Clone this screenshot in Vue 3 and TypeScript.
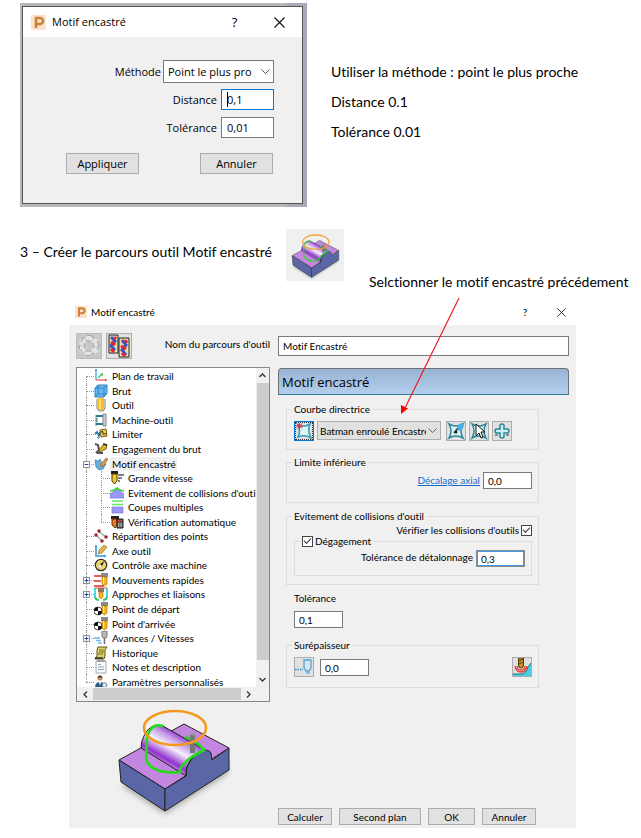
<script setup lang="ts">
import { ref } from 'vue'

interface TreeItem {
  label: string
  icon: string
  level: 1 | 2
  toggle?: '+' | '-'
  selected?: boolean
  first?: boolean
  last?: boolean
}

const method = ref('Point le plus pro')
const distance = ref('0,1')
const tolerance = ref('0,01')
const pathName = ref('Motif Encastré')
const curve = ref('Batman enroulé Encastré')
const axialOffset = ref('0,0')
const checkCollisions = ref(true)
const clearance = ref(true)
const gougeTolerance = ref('0,3')
const pathTolerance = ref('0,1')
const thickness = ref('0,0')

const items: TreeItem[] = [
  { label: 'Plan de travail', icon: 'plane', level: 1, first: true },
  { label: 'Brut', icon: 'block', level: 1 },
  { label: 'Outil', icon: 'tool', level: 1 },
  { label: 'Machine-outil', icon: 'machine', level: 1 },
  { label: 'Limiter', icon: 'limit', level: 1 },
  { label: 'Engagement du brut', icon: 'engage', level: 1 },
  { label: 'Motif encastré', icon: 'pattern', level: 1, toggle: '-', selected: true },
  { label: 'Grande vitesse', icon: 'speed', level: 2 },
  { label: "Evitement de collisions d'outil", icon: 'avoid', level: 2 },
  { label: 'Coupes multiples', icon: 'cuts', level: 2 },
  { label: 'Vérification automatique', icon: 'verify', level: 2, last: true },
  { label: 'Répartition des points', icon: 'points', level: 1 },
  { label: 'Axe outil', icon: 'axis', level: 1 },
  { label: 'Contrôle axe machine', icon: 'compass', level: 1 },
  { label: 'Mouvements rapides', icon: 'rapid', level: 1, toggle: '+' },
  { label: 'Approches et liaisons', icon: 'leads', level: 1, toggle: '+' },
  { label: 'Point de départ', icon: 'start', level: 1 },
  { label: "Point d'arrivée", icon: 'start', level: 1 },
  { label: 'Avances / Vitesses', icon: 'feeds', level: 1, toggle: '+' },
  { label: 'Historique', icon: 'history', level: 1 },
  { label: 'Notes et description', icon: 'notes', level: 1 },
  { label: 'Paramètres personnalisés', icon: 'user', level: 1, last: true },
]

const mill = '<path d="M7 0h7v4H7z" fill="#8a8a8a"/><path d="M8 4h5v7l-2.500 2L8 11z" fill="#f4b824" stroke="#94660a" stroke-width=".6"/><path d="M9.500 4v7" stroke="#ffe58a"/>'

const icons: Record<string, string> = {
  plane: '<path d="M2 0v11" stroke="#3fa9dc" stroke-width="1.300"/><path d="M2 11h10" stroke="#ee6a6a" stroke-width="1.400"/><path d="M4 9l4-4" stroke="#3fc25c" stroke-width="1.300"/><path d="M6 4.500h3v3z" fill="#3fc25c"/><path d="M.5 2L2 0l1.500 2z" fill="#3fa9dc"/><path d="M11 9.500l2.500 1.500-2.500 1.500z" fill="#d9534f"/>',
  block: '<path d="M1 4l3-3h9v8l-3 4H1z" fill="#6ab8f2" stroke="#2f7fc4"/><path d="M1 4h9v9M10 4l3-3M4 1v9L1 13M4 10h9" fill="none" stroke="#2f7fc4" stroke-width=".9"/>',
  tool: '<path d="M4 0h6v9q0 3-3 4-3-1-3-4z" fill="#f5bd22"/><path d="M3 1v9l2 3h4l2-3V1" fill="none" stroke="#8f8f8f" stroke-width="1.200"/><path d="M6 1v10" stroke="#ffe391" stroke-width="1.500"/>',
  machine: '<path d="M2 2v11" stroke="#b9bdc0" stroke-width="2"/><path d="M2 3h7M2 11h9" stroke="#247d8c" stroke-width="2"/><path d="M9 1h3v12H9z" fill="#c8cccf" stroke="#858d91"/><path d="M3 5v4" stroke="#247d8c" stroke-width="1"/>',
  limit: '<path d="M1 7l2-2 2 4 1-4" fill="none" stroke="#2284b5" stroke-width="1.800"/><path d="M6 3l6-1 1 7-6 1z" fill="#f4cf4e" stroke="#6d5a16"/><path d="M7 5q2-2 2 1t3 0" fill="none" stroke="#222"/><path d="M3 10l2 2" stroke="#2284b5"/>',
  engage: '<path d="M1 2l3 1 1 5-3 3M3 11h6" fill="none" stroke="#555" stroke-width="2"/><path d="M5 8l5-6 3 1-1 4-6 3z" fill="#e6b51f" stroke="#5a4712" stroke-width=".8"/><path d="M9 2l4 1" stroke="#222" stroke-width="1.500"/>',
  pattern: '<path d="M1 3l4 1 1-2 2 4 4 1-3 5-4 1-3-3z" fill="#69aede" stroke="#3a7fb5" stroke-width=".7"/><path d="M6 8l6-7 2 1-5 8z" fill="#d49c4a" stroke="#8b6224" stroke-width=".6"/>',
  speed: '<path d="M1 0h7v3H1z" fill="#222"/><path d="M2 3h5v7l-2.500 3L2 10z" fill="#f5c52d" stroke="#4b3a06"/><path d="M8 4h6M8 7h4M8 10h2" stroke="#555" stroke-width="1.500"/>',
  avoid: '<path d="M0 12V8l7-5 7 5v4z" fill="#9b99f7" stroke="#7673e0" stroke-width=".7"/><path d="M0 5l4-1 3-2 3 2 4 1" fill="none" stroke="#3dd33d" stroke-width="1.600"/>',
  cuts: '<path d="M2 1h11M2 4.500h11" stroke="#62e660" stroke-width="1.500"/><path d="M2 7h11v6H2z" fill="#9b99f7" stroke="#7a78de" stroke-width=".7"/>',
  verify: '<path d="M1 1h8v3H1z" fill="#222"/><path d="M2 4h5v6l-2 3-3-3z" fill="#ea7b28" stroke="#6c2b05"/><path d="M7 4h6v9H7z" fill="#555" stroke="#222"/><path d="M8 6h4" stroke="#e33" stroke-width="1.500"/><path d="M8 9h4M8 11h4" stroke="#fff" stroke-dasharray="1 .5"/>',
  points: '<path d="M4 2l8 6M2 6l6 6" stroke="#8aa" stroke-width="1.200"/><g fill="#a51d2a"><circle cx="5" cy="2" r="1.700"/><circle cx="12" cy="8" r="1.700"/><circle cx="2" cy="6" r="1.700"/><circle cx="8" cy="12" r="1.700"/></g>',
  axis: '<path d="M2 2v10h9" fill="none" stroke="#3395c2" stroke-width="1.500"/><path d="M.5 3L2 .5 3.500 3zM10 10.500l2.500 1.500-2.500 1.500z" fill="#3395c2"/><path d="M4 10l1-4 5-5 3 2-5 6z" fill="#e2b447" stroke="#8c7640" stroke-width=".7"/>',
  compass: '<circle cx="7" cy="7" r="5.700" fill="#f5d66b" stroke="#333" stroke-width="1.300"/><path d="M10.500 3L8 8 3.500 11 6 6z" fill="#222"/><path d="M6 6l2 2-4.500 3z" fill="#fff"/>',
  rapid: '<path d="M0 3h7M0 8h7M0 13h10" stroke="#e02e25" stroke-width="1.600"/>' + mill,
  leads: '<path d="M1 1v8q0 4 4 4M13 1v8q0 4-4 4" fill="none" stroke="#29dbe2" stroke-width="1.800"/><path d="M1 10q1 3 4 3M13 10q-1 3-4 3" fill="none" stroke="#3bc34b" stroke-width="1.600"/><path d="M1 1h12" stroke="#e05a4a"/><path d="M4 1h6v4H4z" fill="#8a7a60"/><path d="M5 5h4v5l-2 2-2-2z" fill="#f4b824" stroke="#94660a" stroke-width=".6"/>',
  start: mill + '<circle cx="4" cy="9" r="4" fill="#fff" stroke="#222" stroke-width=".8"/><path d="M4 9V5a4 4 0 0 0-4 4zM4 9v4a4 4 0 0 0 4-4z" fill="#111"/>',
  feeds: '<path d="M8 0h5v5l-1 2H9L8 5z" fill="#bbb" stroke="#777"/><path d="M10.500 7v6" stroke="#777" stroke-width="1.600"/><path d="M0 7h6M2 9.500h5M4 12h4" stroke="#6fb9ec" stroke-width="1.300"/>',
  history: '<path d="M4 1h9l-2 3v6l-1 3H1l2-3V4z" fill="#dcd45f" stroke="#5a5520"/><path d="M5 4h5M5 6h5M4 8h5" stroke="#5a5520" stroke-width=".8"/><path d="M1 12h8" stroke="#222" stroke-width="1.400"/>',
  notes: '<path d="M2 1h10v12H2z" fill="#fafafa" stroke="#aaa"/><path d="M4 0v2M6 0v2M8 0v2M10 0v2" stroke="#777"/><path d="M4 4.500h3M4 7h6M4 9.500h6" stroke="#8aa9c8"/>',
  user: '<circle cx="6" cy="3" r="2.600" fill="#c88f5d"/><path d="M3.400 2.500q2.600-4 5.200 0z" fill="#333"/><path d="M1 13q0-6 5-6t5 6z" fill="#2b5879"/><circle cx="10.500" cy="10" r="2.300" fill="#dbe8f2" stroke="#5f8bab"/><path d="M5 7l1 4 1-4z" fill="#fff"/>',
}
</script>

<template>
  <main class="page">
    <section class="intro">
      <div class="shot">
        <form class="dialog small" @submit.prevent>
          <header class="titlebar">
            <svg class="logo" viewBox="0 0 15 15" aria-hidden="true">
              <rect width="15" height="15" fill="#fbe3cb" />
              <path d="M5 13V3h4a3 3 0 0 1 0 6H5" fill="none" stroke="#c98239" stroke-width="2.600" />
            </svg>
            <h2>Motif encastré</h2>
            <button type="button" class="caption" aria-label="Aide">?</button>
            <button type="button" class="caption" aria-label="Fermer">
              <svg viewBox="0 0 11 11"><path d="M.5.5l10 10M10.500.5l-10 10" stroke="#111" stroke-width="1.100" /></svg>
            </button>
          </header>
          <div class="fields">
            <div class="field method">
              <label for="methode">Méthode</label>
              <span class="combo">
                <select id="methode" v-model="method"><option>Point le plus pro</option></select>
                <svg viewBox="0 0 9 5"><path d="M.5.5l4 4 4-4" fill="none" stroke="#555" /></svg>
              </span>
            </div>
            <div class="field">
              <label for="distance">Distance</label>
              <span class="focused">
                <input id="distance" v-model="distance" type="text" />
                <i class="caret"></i>
              </span>
            </div>
            <div class="field">
              <label for="tolerance">Tolérance</label>
              <input id="tolerance" v-model="tolerance" type="text" />
            </div>
          </div>
          <footer class="actions">
            <button type="submit">Appliquer</button>
            <button type="button">Annuler</button>
          </footer>
        </form>
      </div>
      <div class="notes">
        <p>Utiliser la méthode : point le plus proche</p>
        <p>Distance 0.1</p>
        <p>Tolérance 0.01</p>
      </div>
    </section>

    <section class="step">
      <p>3 – Créer le parcours outil Motif encastré</p>
      <svg class="thumb" viewBox="0 0 58 52" aria-hidden="true">
        <rect width="58" height="52" fill="#f0f0f0" />
        <use href="#part" x="4" y="4" width="50" height="47" />
      </svg>
    </section>

    <section class="detail">
      <p class="callout">Selctionner le motif encastré précédement</p>
      <svg class="arrow" viewBox="0 0 60 118" aria-hidden="true">
        <path d="M58 1L4 111" stroke="#ee1c1c" stroke-width="1.200" />
        <path d="M0 117V108l7 3.500z" fill="#ff0000" />
      </svg>

      <form class="dialog large" @submit.prevent>
        <header class="titlebar">
          <svg class="logo" viewBox="0 0 15 15" aria-hidden="true">
            <rect width="15" height="15" fill="#fbe3cb" />
            <path d="M5 13V3h4a3 3 0 0 1 0 6H5" fill="none" stroke="#c98239" stroke-width="2.600" />
          </svg>
          <h2>Motif encastré</h2>
          <button type="button" class="caption" aria-label="Aide">?</button>
          <button type="button" class="caption" aria-label="Fermer">
            <svg viewBox="0 0 11 11"><path d="M.5.5l10 10M10.500.5l-10 10" stroke="#222" stroke-width="1.100" /></svg>
          </button>
        </header>

        <div class="body">
          <div class="left">
            <div class="toprow">
              <button type="button" class="tile off" aria-label="Recycler">
                <svg viewBox="0 0 24 24">
                  <path d="M12 4l7 4v8l-7 4-7-4V8z" fill="none" stroke="#e4e4e4" stroke-width="5" stroke-dasharray="7 1.060" stroke-dashoffset="3" />
                  <path d="M10 1l5 1 2 3M20 7l2 5-2 4M17 19l-5 3-3-1M6 19l-4-5 1-3M4 8l3-5M9 7l5 0M16 9l1 5M14 17l-5 0M7 14l1-5" fill="none" stroke="#a0a0a0" stroke-width="1" />
                </svg>
              </button>
              <button type="button" class="tile" aria-label="Copier">
                <svg viewBox="0 0 24 24">
                  <path d="M2 1h9v18H2z" fill="#eedcae" stroke="#222" />
                  <path d="M12 4h10v19H12z" fill="#eedcae" stroke="#222" />
                  <path d="M4 3l4 4-4 5 4 4M15 6l4 5-4 5 4 5" fill="none" stroke="#2f55cf" stroke-width="3" />
                  <path d="M7 3l2 2M4 8l4 3M4 15l3 3M18 6l2 3M14 12l5 3M15 19l3 3" stroke="#e12332" stroke-width="3" />
                </svg>
              </button>
              <label for="nom">Nom du parcours d'outil</label>
            </div>

            <div class="tree">
              <div class="viewport">
                <ul>
                  <li v-for="item in items" :key="item.label" :class="{ first: item.first, last: item.last }">
                    <span class="gutter" :class="{ through: item.level === 2 }">
                      <button v-if="item.toggle" type="button" class="toggle" :aria-label="item.label">
                        <svg viewBox="0 0 7 7">
                          <path d="M1.500 3.500h4" stroke="#2c4a9a" />
                          <path v-if="item.toggle === '+'" d="M3.500 1.500v4" stroke="#2c4a9a" />
                        </svg>
                      </button>
                    </span>
                    <span v-if="item.level === 2" class="gutter inner"></span>
                    <svg class="icon" viewBox="0 0 14 14" fill="none" aria-hidden="true" v-html="icons[item.icon]"></svg>
                    <span class="name" :class="{ selected: item.selected }">{{ item.label }}</span>
                  </li>
                </ul>
                <div class="vbar">
                  <svg viewBox="0 0 7 5"><path d="M.5 4l3-3 3 3" /></svg>
                  <i></i>
                  <svg viewBox="0 0 7 5"><path d="M.5 1l3 3 3-3" /></svg>
                </div>
              </div>
              <div class="hbar">
                <svg viewBox="0 0 5 7"><path d="M4 .5l-3 3 3 3" /></svg>
                <i></i>
                <svg viewBox="0 0 5 7"><path d="M1 .5l3 3-3 3" /></svg>
              </div>
            </div>

            <svg class="part" viewBox="0 0 118 110" role="img" aria-label="Motif encastré">
              <defs>
                <linearGradient id="cyl" x1="66" y1="28" x2="50" y2="56" gradientUnits="userSpaceOnUse">
                  <stop offset="0" stop-color="#9440d0" />
                  <stop offset=".2" stop-color="#c79be8" />
                  <stop offset=".48" stop-color="#f6effc" />
                  <stop offset=".85" stop-color="#9133cd" />
                  <stop offset="1" stop-color="#b97be0" />
                </linearGradient>
                <filter id="soft" x="-20%" y="-20%" width="140%" height="150%"><feGaussianBlur stdDeviation="3" /></filter>
                <symbol id="part" viewBox="0 0 118 110">
                  <path d="M8 78l43 28 62-40V54z" fill="#555" opacity=".6" filter="url(#soft)" />
                  <path d="M5 53L70 17l45 24-64 41z" fill="#c487e0" stroke="#222" />
                  <path d="M5 53l46 29v22L7 75z" fill="#5a66a6" stroke="#222" />
                  <path d="M27 41q0-7 3-12 4-9 11-10 4-1 8 0l42 24q-12 5-16 16l-3 10z" fill="url(#cyl)" stroke="#222" />
                  <path d="M51 82l21-13q0-12 6-18 6-7 13-8 5 0 6 3l1 7 17-12v22l-64 41z" fill="#5a66a6" stroke="#222" />
                  <path d="M72 69q0-9 3-13 6-10 16-13" fill="none" stroke="#222" />
                  <path d="M49 19q-8-2-11 2-4 4-5 11l-1 20q1 6 9 10 11 5 25 3 0-5 4-8 5-6 11-9l9-5q-7-9-19-13" fill="none" stroke="#24db18" stroke-width="2.600" />
                  <path d="M76 27h5v19h-5z" fill="#777" />
                  <ellipse cx="78.500" cy="27" rx="2.500" ry="1.500" fill="#999" />
                  <ellipse cx="61" cy="21" rx="31" ry="17" fill="none" stroke="#f39a1e" stroke-width="2.600" />
                </symbol>
              </defs>
              <use href="#part" width="118" height="110" />
            </svg>
          </div>

          <div class="right">
            <input id="nom" v-model="pathName" class="wide" type="text" />
            <h3>Motif encastré</h3>

            <div class="groups">
              <fieldset class="curve">
                <legend>Courbe directrice</legend>
                <button type="button" class="tool active" aria-label="Nouveau motif">
                  <svg viewBox="0 0 18 18">
                    <path d="M3 3q6 3 12-1-3 6 1 14-6-4-13-1 3-6 0-12z" fill="#def5f8" stroke="#3a9fb4" stroke-width="1.600" />
                    <path d="M1 4h7M4.500 1v7M2 1.500l5 5M7 1.500l-5 5" stroke="#e7272d" />
                  </svg>
                </button>
                <span class="combo">
                  <select v-model="curve" aria-label="Courbe directrice"><option>Batman enroulé Encastré</option></select>
                  <svg viewBox="0 0 9 5"><path d="M.5.5l4 4 4-4" fill="none" stroke="#666" /></svg>
                </span>
                <button type="button" class="tool" aria-label="Capturer">
                  <svg viewBox="0 0 18 18">
                    <path d="M2 2q7 4 14 0-4 7 0 14-7-4-14 0 4-7 0-14z" fill="#d8f3f6" stroke="#2d8799" stroke-width="1.500" />
                    <path d="M7 11l4-5" stroke="#333" stroke-width="1.500" />
                    <path d="M10 4l4-3 3 3-2 4-4 1z" fill="#49aee8" />
                    <circle cx="9" cy="10" r="1.500" fill="#222" />
                  </svg>
                </button>
                <button type="button" class="tool" aria-label="Sélectionner">
                  <svg viewBox="0 0 18 18">
                    <path d="M2 2q7 4 14 0-4 7 0 14-7-4-14 0 4-7 0-14z" fill="#d8f3f6" stroke="#2d8799" stroke-width="1.500" />
                    <path d="M6 2v12l3-3 2 5 2-1-2-5h4z" fill="#fff" stroke="#111" />
                  </svg>
                </button>
                <button type="button" class="tool" aria-label="Ajouter">
                  <svg viewBox="0 0 18 18">
                    <path d="M7 3q2-2 4 0v4h4q2 2 0 4h-4v4q-2 2-4 0v-4H3q-2-2 0-4h4z" fill="#c9f0f5" stroke="#2d8799" stroke-width="1.500" />
                    <path d="M2 13h3M13 13h3" stroke="#333" />
                  </svg>
                </button>
              </fieldset>

              <fieldset class="limit">
                <legend>Limite inférieure</legend>
                <a href="#decalage">Décalage axial</a>
                <input id="decalage" v-model="axialOffset" type="text" aria-label="Décalage axial" />
              </fieldset>

              <fieldset class="collide">
                <legend>Evitement de collisions d'outil</legend>
                <label class="check">Vérifier les collisions d'outils <input v-model="checkCollisions" type="checkbox" /></label>
                <fieldset>
                  <legend><label class="check"><input v-model="clearance" type="checkbox" />Dégagement</label></legend>
                  <label for="detalonnage">Tolérance de détalonnage</label>
                  <input id="detalonnage" v-model="gougeTolerance" class="hot" type="text" />
                </fieldset>
              </fieldset>

              <div class="tolerance">
                <label for="tol">Tolérance</label>
                <input id="tol" v-model="pathTolerance" type="text" />
              </div>

              <fieldset class="stock">
                <legend>Surépaisseur</legend>
                <button type="button" class="tool" aria-label="Surépaisseur radiale">
                  <svg viewBox="0 0 18 18">
                    <path d="M0 11.500h8" stroke="#2b8fd0" stroke-width="1.500" stroke-dasharray="1.500 1" />
                    <path d="M9 2h7v8l-2 3h-3l-2-3z" fill="none" stroke="#4aa5e0" stroke-width="1.300" />
                    <path d="M11 14h4v2h-4z" fill="#84c2ec" />
                  </svg>
                </button>
                <input v-model="thickness" type="text" aria-label="Surépaisseur" />
                <button type="button" class="tool end" aria-label="Surépaisseur des composants">
                  <svg viewBox="0 0 18 18">
                    <path d="M0 16h8q5 0 7-7l3-4v13H0z" fill="#48cde1" />
                    <path d="M0 16h8q5 0 7-7l3-4" fill="none" stroke="#277" />
                    <path d="M2 8q1 6 6 6t6-6M4 8q0 4 4 4t4-4" fill="none" stroke="#ed3434" stroke-width="1.300" />
                    <path d="M5.500 0h5v7q0 3-2.500 3T5.500 7z" fill="#c59a23" stroke="#4c3a0a" />
                    <path d="M6 3l4-2M6 6l4-2" stroke="#4c3a0a" />
                  </svg>
                </button>
              </fieldset>
            </div>

            <footer class="actions">
              <button type="submit">Calculer</button>
              <button type="button" class="longer">Second plan</button>
              <button type="button" class="short">OK</button>
              <button type="button">Annuler</button>
            </footer>
          </div>
        </div>
      </form>
    </section>
  </main>
</template>

<style>
body {
  margin: 0;
  background: #fff;
}
</style>

<style scoped>
* {
  box-sizing: border-box;
}
.page {
  padding: 3px 16px 10px 20px;
  color: #000;
  font: 14px/20px Lato, "Open Sans", sans-serif;
  font-variant-ligatures: none;
}
p,
h2,
h3,
ul {
  margin: 0;
  padding: 0;
  font-weight: 400;
}
svg {
  display: block;
}
.intro {
  display: flex;
  gap: 24px;
}
.shot {
  flex: 0 0 287px;
  padding: 3px 4px 3px 2px;
  background: linear-gradient(90deg, #b9b9b9 92%, #a9a8b8 94%);
}
.notes {
  display: grid;
  gap: 10px;
  align-content: start;
  padding-top: 59px;
}
.step {
  display: flex;
  align-items: center;
  gap: 14px;
  margin-top: 22px;
}
.step p {
  padding-bottom: 6px;
}
.thumb {
  width: 58px;
  height: 52px;
}
.detail {
  position: relative;
}
.callout {
  margin: -9px -10px 0 349px;
}
.arrow {
  position: absolute;
  z-index: 1;
  left: 381px;
  top: 25px;
  width: 60px;
  height: 118px;
}

.dialog {
  color: #000;
}
button,
input,
select {
  font: inherit;
  color: inherit;
  margin: 0;
  border-radius: 0;
}
button {
  padding: 0;
  border: 1px solid #adadad;
  background: #e1e1e1;
}
input[type="text"] {
  min-width: 0;
  border: 1px solid #7a7a7a;
  background: #fff;
  outline: none;
}
.titlebar {
  display: flex;
  align-items: center;
  background: #fff;
}
.titlebar h2 {
  flex: 1;
  font-size: inherit;
  line-height: inherit;
}
.titlebar .caption {
  display: grid;
  place-items: center;
  border: 0;
  background: none;
}
.combo {
  display: grid;
  align-items: center;
}
.combo select,
.combo svg {
  grid-area: 1 / 1;
}
.combo select {
  width: 100%;
  height: 100%;
  appearance: none;
  border: 1px solid #7a7a7a;
  background: #fff;
}
.combo svg {
  width: 9px;
  height: 5px;
  margin-right: 4px;
  justify-self: end;
  pointer-events: none;
}

.small {
  border: 1px solid #555;
  background: #f0f0f0;
  font-family: "Open Sans", "Noto Sans", sans-serif;
  font-size: 11px;
  line-height: 16px;
}
.small .titlebar {
  height: 30px;
  padding-left: 8px;
}
.small .logo {
  width: 15px;
  height: 15px;
  margin-right: 6px;
}
.small .caption {
  width: 45px;
  font-size: 13px;
}
.small .caption svg {
  width: 11px;
  height: 11px;
}
.fields {
  display: grid;
  gap: 7px;
  padding: 23px 28px 0 0;
}
.field {
  display: flex;
  justify-content: flex-end;
  align-items: center;
  gap: 4px;
}
.field.method {
  gap: 2px;
  margin-bottom: -1px;
}
.field input {
  width: 53px;
  height: 21px;
  padding: 0 5px;
}
.field .combo {
  width: 111px;
  height: 23px;
}
.field select {
  padding: 0 18px 0 4px;
}
.focused {
  position: relative;
  display: flex;
}
.focused input {
  border-color: #0078d7;
}
.caret {
  position: absolute;
  left: 6px;
  top: 3px;
  width: 1px;
  height: 15px;
  background: #000;
}
.small .actions {
  display: flex;
  justify-content: space-between;
  padding: 15px 29px 29px 43px;
}
.small .actions button {
  width: 73px;
  height: 21px;
}

.large {
  margin: 7px 49px 0 49px;
  font-family: Lato, "Open Sans", sans-serif;
  font-size: 10px;
  line-height: 14px;
}
.large .titlebar {
  height: 26px;
  padding-left: 6px;
}
.large .logo {
  width: 12px;
  height: 12px;
  margin-right: 4px;
}
.large .caption {
  width: 42px;
}
.large .caption + .caption {
  width: 30px;
}
.large .caption svg {
  width: 9px;
  height: 9px;
}
.body {
  display: grid;
  grid-template-columns: 194px 1fr;
  gap: 8px;
  padding: 8px 7px 3px;
  background: #f0f0f0;
}
.left,
.right {
  display: flex;
  flex-direction: column;
}
.toprow {
  display: flex;
  gap: 4px;
  height: 34px;
}
.toprow label {
  flex: 1;
  padding-top: 4px;
  text-align: right;
}
.tile {
  width: 26px;
  height: 26px;
}
.tile.off {
  background: #c8c8c8;
  border-color: #bcbcbc;
}
.tile svg {
  width: 24px;
  height: 24px;
}
.tree {
  border: 1px solid #828790;
  background: #fff;
}
.viewport {
  display: flex;
  height: 319px;
  overflow: hidden;
}
.tree ul {
  display: grid;
  grid-auto-rows: 1fr;
  flex: 1;
  min-width: 0;
  height: 321px;
  padding-top: 1px;
  overflow: hidden;
  list-style: none;
}
.tree li {
  display: flex;
  align-items: center;
  min-height: 0;
  white-space: nowrap;
}
.gutter {
  position: relative;
  flex: none;
  align-self: stretch;
  width: 17px;
}
.gutter::before,
.gutter::after {
  content: "";
  position: absolute;
  left: 9px;
}
.gutter::before {
  top: 0;
  bottom: 0;
  border-left: 1px dotted #999;
}
.gutter::after {
  top: 50%;
  right: 0;
  border-top: 1px dotted #999;
}
.gutter.through::after {
  display: none;
}
.gutter.inner {
  width: 16px;
}
.gutter.inner::before,
.gutter.inner::after {
  left: 7px;
}
.first .gutter::before {
  top: 50%;
}
.last .gutter:not(.through)::before {
  bottom: 50%;
}
.toggle {
  position: absolute;
  z-index: 1;
  left: 6px;
  top: 50%;
  width: 7px;
  height: 7px;
  margin-top: -3px;
  border: 0;
  outline: 1px solid #919191;
  outline-offset: -1px;
  background: #fff;
}
.toggle svg {
  width: 7px;
  height: 7px;
}
.icon {
  flex: none;
  width: 14px;
  height: 14px;
}
.name {
  margin-left: 2px;
  padding: 0 1px 0 2px;
}
.selected {
  background: #f0f0f0;
}
.vbar,
.hbar {
  display: flex;
  align-items: center;
  background: #f0f0f0;
}
.vbar {
  flex: none;
  flex-direction: column;
  width: 13px;
  padding: 5px 0;
  gap: 5px;
}
.hbar {
  height: 14px;
  padding: 0 18px 0 6px;
  gap: 5px;
}
.vbar i,
.hbar i {
  flex: 1;
  background: #cdcdcd;
}
.vbar i {
  width: 12px;
  margin-bottom: 12px;
}
.hbar i {
  height: 12px;
}
.vbar svg {
  width: 7px;
  height: 5px;
}
.hbar svg {
  width: 5px;
  height: 7px;
}
.vbar path,
.hbar path {
  fill: none;
  stroke: #333;
  stroke-width: 1.300;
}
.part {
  width: 118px;
  height: 110px;
  margin: 5px 0 8px 38px;
}

.wide {
  height: 20px;
  margin-top: 3px;
  padding: 0 4px;
}
h3 {
  height: 27px;
  margin-top: 12px;
  padding-left: 3px;
  border: 1px solid #6f7275;
  border-bottom: 1px solid #28809b;
  border-radius: 4px 4px 0 0;
  background: linear-gradient(#98b3d4, #b3cfec);
  font-family: "Open Sans", sans-serif;
  font-size: 13px;
  line-height: 26px;
}
.groups {
  padding: 7px 30px 0 8px;
}
fieldset {
  display: flex;
  min-width: 0;
  margin: 0;
  padding: 0 6px 0 7px;
  border: 1px solid #dcdcdc;
}
legend {
  height: 14px;
  padding: 0 2px;
  margin-left: -2px;
}
.groups input[type="text"] {
  width: 49px;
  height: 17px;
  padding: 0 4px;
}
.tool {
  flex: none;
  width: 20px;
  height: 20px;
}
.tool svg {
  width: 18px;
  height: 18px;
}
.tool.active {
  border-color: #0078d7;
  outline: 1px dotted #333;
  outline-offset: -2px;
}
.curve {
  height: 48px;
  gap: 3px;
  padding-top: 5px;
}
.curve .combo {
  flex: 0 1 124px;
  height: 19px;
  margin-right: 2px;
}
.curve select {
  padding: 0 14px 0 2px;
  border-color: #adadad;
  background: #e1e1e1;
}
.limit {
  height: 48px;
  margin-top: 5px;
  gap: 3px;
  justify-content: flex-end;
  padding-top: 3px;
}
.limit a {
  padding-top: 1px;
  color: #1668c9;
  text-decoration: underline;
}
.collide {
  display: block;
  height: 76px;
  margin-top: 6px;
}
.check {
  display: flex;
  align-items: center;
  justify-content: flex-end;
  gap: 2px;
}
.check input {
  position: relative;
  width: 11px;
  height: 11px;
  appearance: none;
  border: 1px solid #444;
  background: #fff;
}
.check input:checked::after {
  content: "";
  position: absolute;
  left: 1px;
  top: 1px;
  width: 6px;
  height: 3px;
  border: solid #333;
  border-width: 0 0 1px 1px;
  transform: rotate(-45deg);
}
.collide fieldset {
  height: 42px;
  margin-top: -3px;
  justify-content: flex-end;
  gap: 3px;
  padding-top: 2px;
}
.collide .hot {
  border-color: #8a8a8a;
  box-shadow: inset 0 0 0 1px #3d9bec;
}
.tolerance {
  display: grid;
  justify-items: start;
  gap: 6px;
  margin-top: 6px;
  padding-left: 8px;
}
.stock {
  height: 50px;
  margin-top: 10px;
  padding-top: 5px;
  gap: 6px;
}
.stock input {
  margin-top: 2px;
}
.stock .end {
  margin-left: auto;
}
.right .actions {
  display: flex;
  gap: 7px;
  margin-top: auto;
  padding-right: 33px;
}
.right .actions button {
  flex: 1 1 54px;
  height: 17px;
  line-height: 14px;
}
.right .actions .longer {
  flex: 1 1 82px;
}
.right .actions .short {
  flex: 1 1 47px;
}
</style>
